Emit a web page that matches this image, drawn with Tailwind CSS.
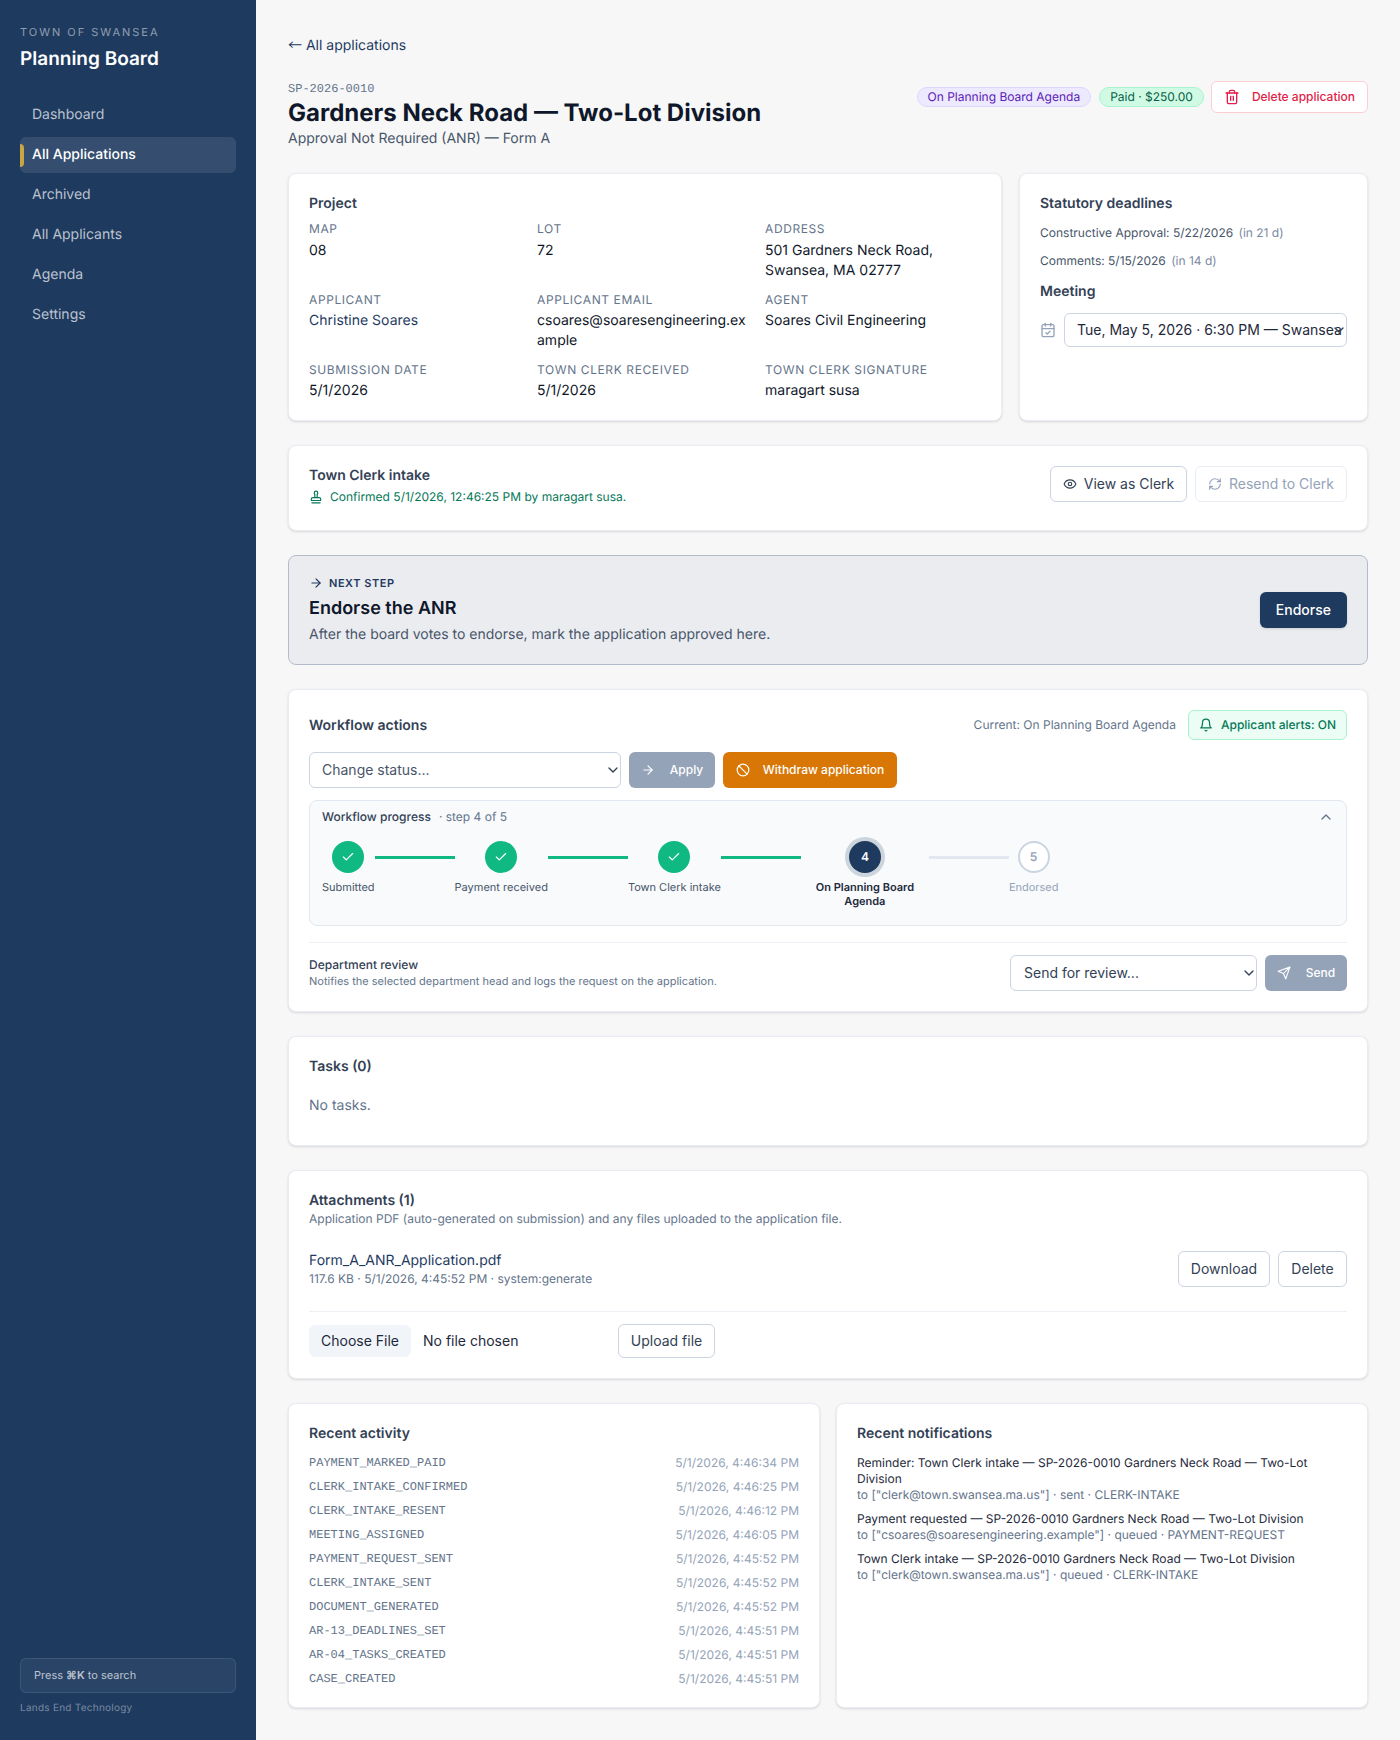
<!DOCTYPE html>
<html lang="en">
<head>
    <meta charset="UTF-8">
    <meta name="viewport" content="width=device-width, initial-scale=1.0">
    <title>SP-2026-0010 - Planning Board</title>
    <script src="https://cdn.jsdelivr.net/npm/@tailwindcss/browser@4"></script>
</head>
<body class="antialiased [text-rendering:geometricPrecision] bg-[#f7f7f8] text-[#0f172a] font-[Inter,sans-serif]">
<div class="flex min-h-[1740px]">

    <!-- Sidebar -->
    <aside class="w-[256px] shrink-0 bg-[#1e3a5f] px-5 pt-[24px] pb-[24px] flex flex-col">
        <div class="text-[11px] leading-4 tracking-[0.18em] text-white/50">TOWN OF SWANSEA</div>
        <div class="mt-[5px] text-[19px] leading-7 font-semibold text-white">Planning Board</div>
        <nav class="mt-[24px] flex flex-col gap-1 text-sm">
            <a class="h-9 flex items-center px-3 rounded-md text-white/70">Dashboard</a>
            <a class="relative h-9 flex items-center px-3 rounded-md bg-white/10 text-white font-medium">
                <span class="absolute left-0 top-[7px] h-[23px] w-1 rounded-r bg-[#c9a544]"></span>
                All Applications
            </a>
            <a class="h-9 flex items-center px-3 rounded-md text-white/70">Archived</a>
            <a class="h-9 flex items-center px-3 rounded-md text-white/70">All Applicants</a>
            <a class="h-9 flex items-center px-3 rounded-md text-white/70">Agenda</a>
            <a class="h-9 flex items-center px-3 rounded-md text-white/70">Settings</a>
        </nav>
        <div class="mt-auto h-[35px] flex items-center px-[13px] rounded-md border border-white/10 bg-white/5 text-[11px] text-white/70">
            Press&nbsp;<b class="font-semibold">⌘K</b>&nbsp;to search
        </div>
        <div class="mt-[7px] text-[10px] leading-4 tracking-wide text-white/40">Lands End Technology</div>
    </aside>

    <!-- Main -->
    <main class="flex-1 min-w-0 px-8 pt-8 pb-8">
        <a class="block mt-px mb-[23px] text-sm leading-6 text-[#1e3a5f]"><span class="font-['Noto_Sans_CJK_SC',sans-serif]">←</span> All applications</a>

        <header class="flex items-start justify-between mb-6">
            <div>
                <div class="font-['Liberation_Mono',monospace] text-xs leading-4 text-[#64748b]">SP-2026-0010</div>
                <h1 class="text-2xl leading-8 font-bold text-[#0f172a]">Gardners Neck Road — Two-Lot Division</h1>
                <div class="text-sm leading-5 text-[#475569]">Approval Not Required (ANR) — Form A</div>
            </div>
            <div class="flex items-center gap-2">
                <span class="h-5 flex items-center px-2.5 rounded-full border border-[#ddd6fe] bg-[#ede9fe] text-xs text-[#5b21b6]">On Planning Board Agenda</span>
                <span class="h-5 flex items-center px-2.5 rounded-full border border-[#a7f3d0] bg-[#d1fae5] text-xs text-[#065f46]">Paid · $250.00</span>
                <button class="-ml-px h-8 flex items-center gap-3 px-3 rounded-md border border-[#fecdd3] bg-white text-xs font-medium text-[#e11d48]">
                    <svg class="w-4 h-4" viewBox="0 0 24 24" fill="none" stroke="currentColor" stroke-width="2" stroke-linecap="round" stroke-linejoin="round"><path d="M3 6h18"/><path d="M19 6v14c0 1-1 2-2 2H7c-1 0-2-1-2-2V6"/><path d="M8 6V4c0-1 1-2 2-2h4c1 0 2 1 2 2v2"/><path d="M10 11v6"/><path d="M14 11v6"/></svg>
                    Delete application
                </button>
            </div>
        </header>

        <div class="flex flex-col gap-6">
            <!-- Project / deadlines -->
            <div class="grid grid-cols-[714px_349px] gap-[17px]">
                <section class="bg-white border border-[#e8edf3] rounded-lg shadow-sm px-5 pt-5 pb-[19px]">
                    <h2 class="text-sm leading-5 font-semibold text-[#334155] mb-[7px]">Project</h2>
                    <dl class="grid grid-cols-3 gap-x-3 gap-y-[11px] text-sm leading-5">
                        <div><dt class="text-xs leading-4 tracking-wider text-[#64748b] mb-1">MAP</dt><dd>08</dd></div>
                        <div><dt class="text-xs leading-4 tracking-wider text-[#64748b] mb-1">LOT</dt><dd>72</dd></div>
                        <div><dt class="text-xs leading-4 tracking-wider text-[#64748b] mb-1">ADDRESS</dt><dd>501 Gardners Neck Road, Swansea, MA 02777</dd></div>
                        <div><dt class="text-xs leading-4 tracking-wider text-[#64748b] mb-[3px]">APPLICANT</dt><dd class="text-[#1e3a5f]">Christine Soares</dd></div>
                        <div><dt class="text-xs leading-4 tracking-wider text-[#64748b] mb-[3px]">APPLICANT EMAIL</dt><dd class="break-all">csoares@soaresengineering.example</dd></div>
                        <div><dt class="text-xs leading-4 tracking-wider text-[#64748b] mb-[3px]">AGENT</dt><dd>Soares Civil Engineering</dd></div>
                        <div><dt class="text-xs leading-4 tracking-wider text-[#64748b] mb-[3px]">SUBMISSION DATE</dt><dd>5/1/2026</dd></div>
                        <div><dt class="text-xs leading-4 tracking-wider text-[#64748b] mb-[3px]">TOWN CLERK RECEIVED</dt><dd>5/1/2026</dd></div>
                        <div><dt class="text-xs leading-4 tracking-wider text-[#64748b] mb-[3px]">TOWN CLERK SIGNATURE</dt><dd>maragart susa</dd></div>
                    </dl>
                </section>
                <section class="bg-white border border-[#e8edf3] rounded-lg shadow-sm p-5">
                    <h2 class="text-sm leading-5 font-semibold text-[#334155]">Statutory deadlines</h2>
                    <p class="mt-[11px] text-xs leading-4 text-[#475569]">Constructive Approval: 5/22/2026 <span class="ml-0.5 text-[#7b8aa1]">(in 21 d)</span></p>
                    <p class="mt-[12px] text-xs leading-4 text-[#475569]">Comments: 5/15/2026 <span class="ml-0.5 text-[#7b8aa1]">(in 14 d)</span></p>
                    <h2 class="mt-[13px] text-sm leading-5 font-semibold text-[#334155]">Meeting</h2>
                    <div class="mt-[11px] flex items-center gap-2">
                        <svg class="w-4 h-4 shrink-0 text-[#94a3b8]" viewBox="0 0 24 24" fill="none" stroke="currentColor" stroke-width="2" stroke-linecap="round" stroke-linejoin="round"><path d="M8 2v4"/><path d="M16 2v4"/><rect width="18" height="18" x="3" y="4" rx="2"/><path d="M3 10h18"/><path d="m9 16 2 2 4-4"/></svg>
                        <div class="relative min-w-0 flex-1">
                            <select class="block appearance-none w-full h-[34px] pl-3 pr-0.5 bg-white border border-[#cbd5e1] rounded-md text-sm text-[#1e293b]">
                                <option>Tue, May 5, 2026 · 6:30 PM — Swansea Town Hall</option>
                            </select>
                            <svg class="absolute right-0 top-[9px] w-4 h-4 text-[#334155] pointer-events-none" viewBox="0 0 24 24" fill="none" stroke="currentColor" stroke-width="2" stroke-linecap="round" stroke-linejoin="round"><path d="m6 9 6 6 6-6"/></svg>
                        </div>
                    </div>
                </section>
            </div>

            <!-- Town Clerk intake -->
            <section class="bg-white border border-[#e8edf3] rounded-lg shadow-sm px-5 pt-5 pb-[23px] flex items-start justify-between">
                <div>
                    <h2 class="text-sm leading-5 font-semibold text-[#334155]">Town Clerk intake</h2>
                    <p class="mt-[1px] flex items-center gap-[7px] text-xs leading-5 text-[#047857]">
                        <svg class="w-[14px] h-[14px]" viewBox="0 0 24 24" fill="none" stroke="currentColor" stroke-width="2" stroke-linecap="round" stroke-linejoin="round"><path d="M5 22h14"/><path d="M19.27 13.73A2.5 2.5 0 0 0 17.5 13h-11A2.5 2.5 0 0 0 4 15.5V17a1 1 0 0 0 1 1h14a1 1 0 0 0 1-1v-1.5c0-.66-.26-1.3-.73-1.77Z"/><path d="M14 13V8.5C14 7 15 7 15 5a3 3 0 0 0-3-3c-1.66 0-3 1-3 3s1 2 1 3.5V13"/></svg>
                        Confirmed 5/1/2026, 12:46:25 PM by maragart susa.
                    </p>
                </div>
                <div class="flex items-center gap-2">
                    <button class="h-9 w-[137px] flex items-center justify-center gap-[7px] rounded-md border border-[#cbd5e1] bg-white text-sm text-[#334155]">
                        <svg class="w-[14px] h-[14px]" viewBox="0 0 24 24" fill="none" stroke="currentColor" stroke-width="2" stroke-linecap="round" stroke-linejoin="round"><path d="M2 12s3-7 10-7 10 7 10 7-3 7-10 7-10-7-10-7Z"/><circle cx="12" cy="12" r="3"/></svg>
                        View as Clerk
                    </button>
                    <button class="h-9 w-[152px] flex items-center justify-center gap-[7px] rounded-md border border-[#e8edf3] bg-white text-sm text-[#94a3b8]">
                        <svg class="w-[14px] h-[14px]" viewBox="0 0 24 24" fill="none" stroke="currentColor" stroke-width="2" stroke-linecap="round" stroke-linejoin="round"><path d="M3 12a9 9 0 0 1 9-9 9.75 9.75 0 0 1 6.74 2.74L21 8"/><path d="M21 3v5h-5"/><path d="M21 12a9 9 0 0 1-9 9 9.75 9.75 0 0 1-6.74-2.74L3 16"/><path d="M8 16H3v5"/></svg>
                        Resend to Clerk
                    </button>
                </div>
            </section>

            <!-- Next step -->
            <section class="bg-[#ebecf0] border border-[#b4bccb] rounded-lg px-5 py-[19px] flex items-center justify-between">
                <div>
                    <div class="flex items-center gap-2 text-[11px] leading-4 font-semibold tracking-wider text-[#1e3a5f]">
                        <svg class="w-[14px] h-[14px] -mr-[2px]" viewBox="0 0 24 24" fill="none" stroke="currentColor" stroke-width="2" stroke-linecap="round" stroke-linejoin="round"><path d="M5 12h14"/><path d="m12 5 7 7-7 7"/></svg>
                        NEXT STEP
                    </div>
                    <h2 class="mt-1 text-lg leading-7 font-semibold text-[#0f172a]">Endorse the ANR</h2>
                    <p class="mt-[2px] text-sm leading-5 text-[#475569]">After the board votes to endorse, mark the application approved here.</p>
                </div>
                <button class="h-9 px-4 rounded-md bg-[#1e3a5f] text-sm font-medium text-white shadow-sm">Endorse</button>
            </section>

            <!-- Workflow actions -->
            <section class="bg-white border border-[#e8edf3] rounded-lg shadow-sm p-5">
                <div class="flex items-center justify-between">
                    <h2 class="mt-[2px] text-sm leading-5 font-semibold text-[#334155]">Workflow actions</h2>
                    <div class="flex items-center gap-3">
                        <span class="text-xs text-[#64748b]">Current: On Planning Board Agenda</span>
                        <span class="h-[30px] flex items-center gap-2 px-[10px] rounded-md border border-[#a7f3d0] bg-[#ecfdf5] text-xs font-medium text-[#047857]">
                            <svg class="w-[14px] h-[14px]" viewBox="0 0 24 24" fill="none" stroke="currentColor" stroke-width="2" stroke-linecap="round" stroke-linejoin="round"><path d="M6 8a6 6 0 0 1 12 0c0 7 3 9 3 9H3s3-2 3-9"/><path d="M10.3 21a1.94 1.94 0 0 0 3.4 0"/></svg>
                            Applicant alerts: ON
                        </span>
                    </div>
                </div>
                <div class="mt-[12px] flex items-center gap-2">
                    <div class="relative w-[312px]">
                        <select class="block appearance-none w-full h-9 pl-3 bg-white border border-[#cbd5e1] rounded-md text-sm text-[#475569]">
                            <option>Change status...</option>
                        </select>
                        <svg class="absolute right-0 top-[10px] w-4 h-4 text-[#334155] pointer-events-none" viewBox="0 0 24 24" fill="none" stroke="currentColor" stroke-width="2" stroke-linecap="round" stroke-linejoin="round"><path d="m6 9 6 6 6-6"/></svg>
                    </div>
                    <button class="h-9 w-[86px] flex items-center justify-center gap-[15px] rounded-md bg-[#94a3b8] text-xs font-medium text-white">
                        <svg class="w-[14px] h-[14px]" viewBox="0 0 24 24" fill="none" stroke="currentColor" stroke-width="2" stroke-linecap="round" stroke-linejoin="round"><path d="M5 12h14"/><path d="m12 5 7 7-7 7"/></svg>
                        Apply
                    </button>
                    <button class="h-9 w-[174px] flex items-center justify-center gap-[13px] rounded-md bg-[#d97706] text-xs font-medium text-white">
                        <svg class="w-[14px] h-[14px]" viewBox="0 0 24 24" fill="none" stroke="currentColor" stroke-width="2" stroke-linecap="round" stroke-linejoin="round"><circle cx="12" cy="12" r="10"/><path d="m4.9 4.9 14.2 14.2"/></svg>
                        Withdraw application
                    </button>
                </div>

                <div class="mt-[12px] bg-[#f8fafc] border border-[#e2e8f0] rounded-lg px-3 pt-[6px] h-[126px]">
                    <div class="flex items-center justify-between text-xs leading-5">
                        <div><span class="font-medium text-[#334155]">Workflow progress</span><span class="ml-2 text-[#64748b]">· step 4 of 5</span></div>
                        <svg class="w-4 h-4 text-[#64748b]" viewBox="0 0 24 24" fill="none" stroke="currentColor" stroke-width="2" stroke-linecap="round" stroke-linejoin="round"><path d="m18 15-6-6-6 6"/></svg>
                    </div>
                    <div class="mt-[14px] flex items-start text-[11px] leading-[14px]">
                        <div class="flex flex-col items-center max-w-[128px] text-center">
                            <div class="w-8 h-8 rounded-full bg-[#10b981] text-white flex items-center justify-center"><svg class="w-[14px] h-[14px]" viewBox="0 0 24 24" fill="none" stroke="currentColor" stroke-width="2" stroke-linecap="round" stroke-linejoin="round"><path d="M20 6 9 17l-5-5"/></svg></div>
                            <div class="mt-[7px] text-[#475569]">Submitted</div>
                        </div>
                        <div class="w-20 h-[3px] mt-[15px] bg-[#10b981]"></div>
                        <div class="flex flex-col items-center max-w-[128px] text-center">
                            <div class="w-8 h-8 rounded-full bg-[#10b981] text-white flex items-center justify-center"><svg class="w-[14px] h-[14px]" viewBox="0 0 24 24" fill="none" stroke="currentColor" stroke-width="2" stroke-linecap="round" stroke-linejoin="round"><path d="M20 6 9 17l-5-5"/></svg></div>
                            <div class="mt-[7px] text-[#475569]">Payment received</div>
                        </div>
                        <div class="w-20 h-[3px] mt-[15px] bg-[#10b981]"></div>
                        <div class="flex flex-col items-center max-w-[128px] text-center">
                            <div class="w-8 h-8 rounded-full bg-[#10b981] text-white flex items-center justify-center"><svg class="w-[14px] h-[14px]" viewBox="0 0 24 24" fill="none" stroke="currentColor" stroke-width="2" stroke-linecap="round" stroke-linejoin="round"><path d="M20 6 9 17l-5-5"/></svg></div>
                            <div class="mt-[7px] text-[#475569]">Town Clerk intake</div>
                        </div>
                        <div class="w-20 h-[3px] mt-[15px] bg-[#10b981]"></div>
                        <div class="flex flex-col items-center max-w-[128px] text-center">
                            <div class="w-8 h-8 rounded-full bg-[#1e3a5f] ring-4 ring-[#1e3a5f]/20 text-white text-xs font-semibold flex items-center justify-center">4</div>
                            <div class="mt-[7px] font-semibold text-[#1e293b]">On Planning Board Agenda</div>
                        </div>
                        <div class="w-20 h-[3px] mt-[15px] bg-[#e2e8f0]"></div>
                        <div class="flex flex-col items-center max-w-[128px] text-center">
                            <div class="w-8 h-8 rounded-full bg-white border-2 border-[#cbd5e1] text-[#94a3b8] text-xs font-semibold flex items-center justify-center">5</div>
                            <div class="mt-[7px] text-[#94a3b8]">Endorsed</div>
                        </div>
                    </div>
                </div>

                <div class="mt-[16px] border-t border-[#edf1f5] pt-[12px] flex items-center justify-between">
                    <div>
                        <div class="text-xs leading-4 font-medium text-[#334155]">Department review</div>
                        <div class="text-[11px] leading-4 text-[#64748b]">Notifies the selected department head and logs the request on the application.</div>
                    </div>
                    <div class="flex items-center gap-2">
                        <div class="relative w-[247px]">
                            <select class="block appearance-none w-full h-9 pl-[13px] bg-white border border-[#cbd5e1] rounded-md text-sm text-[#334155]">
                                <option>Send for review...</option>
                            </select>
                            <svg class="absolute right-0 top-[10px] w-4 h-4 text-[#334155] pointer-events-none" viewBox="0 0 24 24" fill="none" stroke="currentColor" stroke-width="2" stroke-linecap="round" stroke-linejoin="round"><path d="m6 9 6 6 6-6"/></svg>
                        </div>
                        <button class="h-9 w-[82px] flex items-center justify-center gap-[15px] rounded-md bg-[#94a3b8] text-xs font-medium text-white">
                            <svg class="w-[14px] h-[14px]" viewBox="0 0 24 24" fill="none" stroke="currentColor" stroke-width="2" stroke-linecap="round" stroke-linejoin="round"><path d="m22 2-7 20-4-9-9-4Z"/><path d="M22 2 11 13"/></svg>
                            Send
                        </button>
                    </div>
                </div>
            </section>

            <!-- Tasks -->
            <section class="bg-white border border-[#e8edf3] rounded-lg shadow-sm p-5 h-[110px]">
                <h2 class="text-sm leading-5 font-semibold text-[#334155]">Tasks (0)</h2>
                <p class="mt-[19px] text-sm leading-5 text-[#64748b]">No tasks.</p>
            </section>

            <!-- Attachments -->
            <section class="bg-white border border-[#e8edf3] rounded-lg shadow-sm p-5">
                <h2 class="text-sm leading-5 font-semibold text-[#334155]">Attachments (1)</h2>
                <p class="text-xs leading-4 text-[#64748b]">Application PDF (auto-generated on submission) and any files uploaded to the application file.</p>
                <div class="mt-[24px] flex items-center justify-between">
                    <div>
                        <div class="text-sm leading-5 text-[#1e3a5f]">Form_A_ANR_Application.pdf</div>
                        <div class="text-xs leading-4 text-[#64748b]">117.6 KB · 5/1/2026, 4:45:52 PM · system:generate</div>
                    </div>
                    <div class="flex items-center gap-2">
                        <button class="h-9 w-[92px] rounded-md border border-[#cbd5e1] bg-white text-sm text-[#334155]">Download</button>
                        <button class="h-9 w-[69px] rounded-md border border-[#cbd5e1] bg-white text-sm text-[#334155]">Delete</button>
                    </div>
                </div>
                <div class="mt-[24px] border-t border-[#edf1f5] pt-[12px] flex items-center gap-2 h-[47px]">
                    <input type="file" class="w-[301px] text-sm text-[#1e293b] file:h-8 file:mr-3 file:px-3 file:rounded-md file:border-0 file:bg-[#f1f5f9] file:text-sm file:text-[#1e293b]">
                    <button class="h-[34px] w-[97px] rounded-md border border-[#cbd5e1] bg-white text-sm text-[#334155]">Upload file</button>
                </div>
            </section>

            <!-- Activity / notifications -->
            <div class="grid grid-cols-2 gap-4">
                <section class="bg-white border border-[#e8edf3] rounded-lg shadow-sm p-5 h-[305px]">
                    <h2 class="text-sm leading-5 font-semibold text-[#334155] mb-[7px]">Recent activity</h2>
                    <ul class="text-xs">
                        <li class="h-6 flex items-center justify-between"><span class="font-['Liberation_Mono',monospace] text-[#64748b]">PAYMENT_MARKED_PAID</span><span class="text-[#94a3b8]">5/1/2026, 4:46:34 PM</span></li>
                        <li class="h-6 flex items-center justify-between"><span class="font-['Liberation_Mono',monospace] text-[#64748b]">CLERK_INTAKE_CONFIRMED</span><span class="text-[#94a3b8]">5/1/2026, 4:46:25 PM</span></li>
                        <li class="h-6 flex items-center justify-between"><span class="font-['Liberation_Mono',monospace] text-[#64748b]">CLERK_INTAKE_RESENT</span><span class="text-[#94a3b8]">5/1/2026, 4:46:12 PM</span></li>
                        <li class="h-6 flex items-center justify-between"><span class="font-['Liberation_Mono',monospace] text-[#64748b]">MEETING_ASSIGNED</span><span class="text-[#94a3b8]">5/1/2026, 4:46:05 PM</span></li>
                        <li class="h-6 flex items-center justify-between"><span class="font-['Liberation_Mono',monospace] text-[#64748b]">PAYMENT_REQUEST_SENT</span><span class="text-[#94a3b8]">5/1/2026, 4:45:52 PM</span></li>
                        <li class="h-6 flex items-center justify-between"><span class="font-['Liberation_Mono',monospace] text-[#64748b]">CLERK_INTAKE_SENT</span><span class="text-[#94a3b8]">5/1/2026, 4:45:52 PM</span></li>
                        <li class="h-6 flex items-center justify-between"><span class="font-['Liberation_Mono',monospace] text-[#64748b]">DOCUMENT_GENERATED</span><span class="text-[#94a3b8]">5/1/2026, 4:45:52 PM</span></li>
                        <li class="h-6 flex items-center justify-between"><span class="font-['Liberation_Mono',monospace] text-[#64748b]">AR-13_DEADLINES_SET</span><span class="text-[#94a3b8]">5/1/2026, 4:45:51 PM</span></li>
                        <li class="h-6 flex items-center justify-between"><span class="font-['Liberation_Mono',monospace] text-[#64748b]">AR-04_TASKS_CREATED</span><span class="text-[#94a3b8]">5/1/2026, 4:45:51 PM</span></li>
                        <li class="h-6 flex items-center justify-between"><span class="font-['Liberation_Mono',monospace] text-[#64748b]">CASE_CREATED</span><span class="text-[#94a3b8]">5/1/2026, 4:45:51 PM</span></li>
                    </ul>
                </section>
                <section class="bg-white border border-[#e8edf3] rounded-lg shadow-sm p-5 h-[305px]">
                    <h2 class="text-sm leading-5 font-semibold text-[#334155] mb-[11px]">Recent notifications</h2>
                    <ul class="flex flex-col gap-2 text-xs leading-4">
                        <li><div class="text-[#1e293b]">Reminder: Town Clerk intake — SP-2026-0010 Gardners Neck Road — Two-Lot Division</div><div class="text-[#64748b]">to ["clerk@town.swansea.ma.us"] · sent · CLERK-INTAKE</div></li>
                        <li><div class="text-[#1e293b]">Payment requested — SP-2026-0010 Gardners Neck Road — Two-Lot Division</div><div class="text-[#64748b]">to ["csoares@soaresengineering.example"] · queued · PAYMENT-REQUEST</div></li>
                        <li><div class="text-[#1e293b]">Town Clerk intake — SP-2026-0010 Gardners Neck Road — Two-Lot Division</div><div class="text-[#64748b]">to ["clerk@town.swansea.ma.us"] · queued · CLERK-INTAKE</div></li>
                    </ul>
                </section>
            </div>
        </div>
    </main>
</div>
</body>
</html>
